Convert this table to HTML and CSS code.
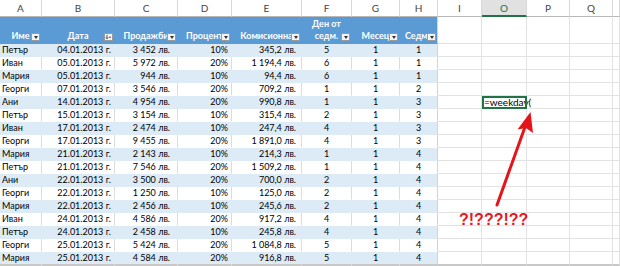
FILE: index.html
```html
<!DOCTYPE html>
<html lang="bg">
<head>
<meta charset="utf-8">
<title>Sheet</title>
<link rel="stylesheet" href="styles.css">
</head>
<body>
<div class="wrap">
<table class="sheet">
<colgroup>
<col class="ca"><col class="cb"><col class="cc"><col class="cd"><col class="ce"><col class="cf"><col class="cg"><col class="chh"><col class="ci"><col class="co"><col class="cp"><col class="cq"><col class="cr">
</colgroup>
<tr class="letters"><th>A</th><th>B</th><th>C</th><th>D</th><th>E</th><th>F</th><th>G</th><th>H</th><th>I</th><th class="sel">O</th><th>P</th><th>Q</th><th></th></tr>
<tr class="thead">
<td class="h">Име<i class="fb"></i></td>
<td class="h">Дата<i class="fb fs"><svg width="8" height="8" viewBox="0 0 8 8"><path d="M2 1v5M0.5 4.5L2 6.5L3.5 4.5" stroke="#333" stroke-width="1" fill="none"/><path d="M4.5 3.5h3l-1.5 2z" fill="#333"/></svg></i></td>
<td class="h">Продажби<i class="fb"></i></td>
<td class="h">Процент<i class="fb"></i></td>
<td class="h">Комисионна<i class="fb"></i></td>
<td class="h">Ден от<br>седм.<i class="fb"></i></td>
<td class="h">Месец<i class="fb"></i></td>
<td class="h hl">Седм<i class="fb"></i></td>
<td></td><td></td><td></td><td></td><td></td>
</tr>
<tr class="b"><td>Петър</td><td>04.01.2013 г.</td><td>3&nbsp;452 лв.</td><td>10%</td><td>345,2 лв.</td><td>5</td><td>1</td><td>1</td><td></td><td></td><td></td><td></td><td></td></tr>
<tr class="w"><td>Иван</td><td>05.01.2013 г.</td><td>5&nbsp;972 лв.</td><td>20%</td><td>1&nbsp;194,4 лв.</td><td>6</td><td>1</td><td>1</td><td></td><td></td><td></td><td></td><td></td></tr>
<tr class="b"><td>Мария</td><td>05.01.2013 г.</td><td>944 лв.</td><td>10%</td><td>94,4 лв.</td><td>6</td><td>1</td><td>1</td><td></td><td></td><td></td><td></td><td></td></tr>
<tr class="w"><td>Георги</td><td>07.01.2013 г.</td><td>3&nbsp;546 лв.</td><td>20%</td><td>709,2 лв.</td><td>1</td><td>1</td><td>2</td><td></td><td></td><td></td><td></td><td></td></tr>
<tr class="b"><td>Ани</td><td>14.01.2013 г.</td><td>4&nbsp;954 лв.</td><td>20%</td><td>990,8 лв.</td><td>1</td><td>1</td><td>3</td><td></td><td class="edit">=weekday(</td><td></td><td></td><td></td></tr>
<tr class="w"><td>Петър</td><td>15.01.2013 г.</td><td>3&nbsp;154 лв.</td><td>10%</td><td>315,4 лв.</td><td>2</td><td>1</td><td>3</td><td></td><td></td><td></td><td></td><td></td></tr>
<tr class="b"><td>Иван</td><td>17.01.2013 г.</td><td>2&nbsp;474 лв.</td><td>10%</td><td>247,4 лв.</td><td>4</td><td>1</td><td>3</td><td></td><td></td><td></td><td></td><td></td></tr>
<tr class="w"><td>Георги</td><td>17.01.2013 г.</td><td>9&nbsp;455 лв.</td><td>20%</td><td>1&nbsp;891,0 лв.</td><td>4</td><td>1</td><td>3</td><td></td><td></td><td></td><td></td><td></td></tr>
<tr class="b"><td>Мария</td><td>21.01.2013 г.</td><td>2&nbsp;143 лв.</td><td>10%</td><td>214,3 лв.</td><td>1</td><td>1</td><td>4</td><td></td><td></td><td></td><td></td><td></td></tr>
<tr class="w"><td>Петър</td><td>21.01.2013 г.</td><td>7&nbsp;546 лв.</td><td>20%</td><td>1&nbsp;509,2 лв.</td><td>1</td><td>1</td><td>4</td><td></td><td></td><td></td><td></td><td></td></tr>
<tr class="b"><td>Ани</td><td>22.01.2013 г.</td><td>3&nbsp;500 лв.</td><td>20%</td><td>700,0 лв.</td><td>2</td><td>1</td><td>4</td><td></td><td></td><td></td><td></td><td></td></tr>
<tr class="w"><td>Георги</td><td>22.01.2013 г.</td><td>1&nbsp;250 лв.</td><td>10%</td><td>125,0 лв.</td><td>2</td><td>1</td><td>4</td><td></td><td></td><td></td><td></td><td></td></tr>
<tr class="b"><td>Мария</td><td>22.01.2013 г.</td><td>2&nbsp;456 лв.</td><td>10%</td><td>245,6 лв.</td><td>2</td><td>1</td><td>4</td><td></td><td></td><td></td><td></td><td></td></tr>
<tr class="w"><td>Иван</td><td>24.01.2013 г.</td><td>4&nbsp;586 лв.</td><td>20%</td><td>917,2 лв.</td><td>4</td><td>1</td><td>4</td><td></td><td></td><td></td><td></td><td></td></tr>
<tr class="b"><td>Петър</td><td>24.01.2013 г.</td><td>2&nbsp;458 лв.</td><td>10%</td><td>245,8 лв.</td><td>4</td><td>1</td><td>4</td><td></td><td></td><td></td><td></td><td></td></tr>
<tr class="w"><td>Георги</td><td>25.01.2013 г.</td><td>5&nbsp;424 лв.</td><td>20%</td><td>1&nbsp;084,8 лв.</td><td>5</td><td>1</td><td>4</td><td></td><td></td><td></td><td></td><td></td></tr>
<tr class="b last"><td>Мария</td><td>25.01.2013 г.</td><td>4&nbsp;584 лв.</td><td>20%</td><td>916,8 лв.</td><td>5</td><td>1</td><td>4</td><td></td><td></td><td></td><td></td><td></td></tr>
</table>
<svg class="arrow" width="620" height="266" viewBox="0 0 620 266">
<line x1="497" y1="205" x2="525" y2="127" stroke="#e5141a" stroke-width="3" stroke-linecap="round"/>
<path d="M530.5 112 L533 133 L526 128 L517.5 129.5 Z" fill="#e5141a"/>
</svg>
<div class="note">?!???!??</div>
</div>
</body>
</html>
```

FILE: styles.css
```css
html, body {
  margin: 0;
  padding: 0;
  background: #ffffff;
}

.wrap {
  position: relative;
  width: 620px;
  height: 266px;
  overflow: hidden;
}

.sheet {
  table-layout: fixed;
  width: 620px;
  border-collapse: separate;
  border-spacing: 0;
  font-family: Lato, "Noto Sans", sans-serif;
  font-size: 9px;
  color: #000;
}

.ca { width: 42px; }
.cb { width: 73px; }
.cc { width: 63px; }
.cd { width: 54px; }
.ce { width: 70px; }
.cf { width: 50px; }
.cg { width: 48px; }
.chh { width: 38px; }
.ci { width: 44px; }
.co { width: 45px; }
.cp { width: 43px; }
.cq { width: 43px; }
.cr { width: 7px; }

.sheet td,
.sheet th {
  box-sizing: border-box;
  padding: 0;
  overflow: hidden;
  white-space: nowrap;
}

/* column letters */
.letters th {
  height: 17px;
  font-weight: normal;
  font-size: 10px;
  color: #444;
  background: #ffffff;
  border-right: 1px solid #d8d8d8;
  border-bottom: 1px solid #b8b8b8;
  text-align: center;
  vertical-align: middle;
}

.letters th.sel {
  background: #e1e1e1;
  color: #217346;
  border-bottom: 2px solid #217346;
}

/* table header */
.thead td {
  height: 27px;
  border-right: 1px solid #e2e2e2;
  border-bottom: 1px solid #e2e2e2;
}

.thead td.h {
  position: relative;
  background: #5b9bd5;
  border-right-color: #5b9bd5;
  border-bottom-color: #5b9bd5;
  color: #ffffff;
  font-weight: bold;
  text-align: center;
  vertical-align: bottom;
  line-height: 12px;
  padding-bottom: 1px;
}

.thead td.hl {
  text-align: left;
  padding-left: 5px;
  border-right-color: #d4d4d4;
}

.fb {
  position: absolute;
  right: 1px;
  bottom: 2px;
  width: 9px;
  height: 8px;
  box-sizing: border-box;
  background: #f3f3f3;
  border: 1px solid #9a9a9a;
}

.fb::after {
  content: "";
  position: absolute;
  left: 1.5px;
  top: 2px;
  border-left: 2.5px solid transparent;
  border-right: 2.5px solid transparent;
  border-top: 3px solid #333;
}

.fb.fs::after {
  display: none;
}

.fb.fs svg {
  display: block;
  width: 7px;
  height: 6px;
}

/* data rows */
tr.b td,
tr.w td {
  height: 13px;
  line-height: 12px;
  vertical-align: bottom;
  border-right: 1px solid #e2e2e2;
  border-bottom: 1px solid #e2e2e2;
  padding-right: 3px;
}

tr.b td:nth-child(-n+8) {
  background: #ddebf7;
  border-right-color: #ddebf7;
  border-bottom-color: #ddebf7;
}

tr.w td:nth-child(-n+8) {
  background: #ffffff;
  border-right-color: #dcdcdc;
  border-bottom-color: #ffffff;
}

tr.b td:nth-child(8),
tr.w td:nth-child(8) {
  border-right-color: #d4d4d4;
}

tr.b td:nth-child(1),
tr.w td:nth-child(1) {
  text-align: left;
  padding-left: 2px;
}

tr.b td:nth-child(2),
tr.w td:nth-child(2),
tr.b td:nth-child(4),
tr.w td:nth-child(4) {
  text-align: right;
}

tr.b td:nth-child(3),
tr.w td:nth-child(3) {
  text-align: right;
  padding-right: 7px;
}

tr.b td:nth-child(5),
tr.w td:nth-child(5) {
  text-align: right;
  padding-right: 5px;
}

tr.b td:nth-child(6),
tr.w td:nth-child(6),
tr.b td:nth-child(7),
tr.w td:nth-child(7),
tr.b td:nth-child(8),
tr.w td:nth-child(8) {
  text-align: center;
  padding-right: 0;
}

tr.last td {
  border-bottom: 2px solid #c8c8c8 !important;
}

tr.b td.edit {
  overflow: visible;
  text-align: left;
  padding-left: 2px;
  font-size: 10px;
  color: #000;
  outline: 2px solid #217346;
  outline-offset: -2px;
}

.arrow {
  position: absolute;
  left: 0;
  top: 0;
  pointer-events: none;
}

.note {
  position: absolute;
  left: 459px;
  top: 212px;
  font-family: "Liberation Sans", Arial, sans-serif;
  font-weight: bold;
  font-size: 16px;
  line-height: 16px;
  color: #e3191e;
}
```
